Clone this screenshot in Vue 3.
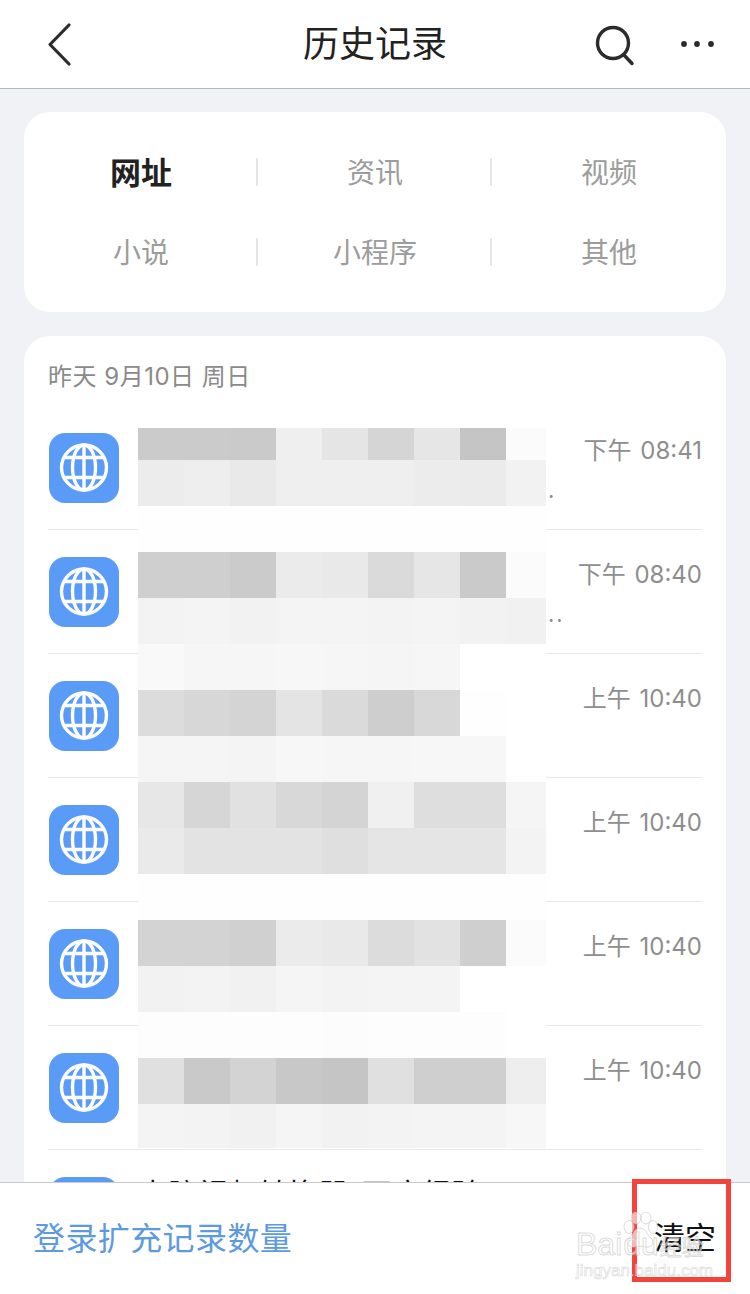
<template>
  <div class="page">
    <header class="top-bar">
      <div class="bar-left">
        <svg class="back" width="30" height="46" viewBox="0 0 30 46" fill="none">
          <path d="M24 4 L5 23.5 L24 43" stroke="#2b2b2b" stroke-width="3.2" stroke-linecap="round" stroke-linejoin="round" />
        </svg>
      </div>
      <h1 class="title">历史记录</h1>
      <div class="bar-right">
        <svg class="search" width="44" height="46" viewBox="0 0 44 46" fill="none">
          <circle cx="20" cy="20" r="15.5" stroke="#2b2b2b" stroke-width="3.4" />
          <path d="M31 32 L39 40.5" stroke="#2b2b2b" stroke-width="3.4" stroke-linecap="round" />
        </svg>
        <svg class="more" width="36" height="10" viewBox="0 0 36 10">
          <circle cx="4" cy="5" r="2.9" fill="#2b2b2b" />
          <circle cx="17" cy="5" r="2.9" fill="#2b2b2b" />
          <circle cx="31" cy="5" r="2.9" fill="#2b2b2b" />
        </svg>
      </div>
    </header>

    <main class="content">
      <section class="card tabs">
        <div v-for="tab in tabs" :key="tab" class="tab" :class="{ active: tab === '网址' }">
          {{ tab }}
        </div>
      </section>

      <section class="card history">
        <div class="date">昨天 9月10日 周日</div>
        <div v-for="(row, i) in rows" :key="i" class="row">
          <div class="site-icon">
            <svg width="52" height="52" viewBox="0 0 52 52" fill="none" stroke="#fff" stroke-width="3.4">
              <circle cx="26" cy="25.5" r="22.5" />
              <ellipse cx="26" cy="25.5" rx="11.5" ry="22.5" />
              <path d="M26 3 V48 M6.5 15.5 H45.5 M6.5 35.5 H45.5" />
            </svg>
          </div>
          <div class="row-body">
            <div class="row-title">{{ row.title }}</div>
            <div class="row-sub">{{ row.sub }}</div>
          </div>
          <div class="row-time">{{ row.time }}</div>
        </div>

        <!-- mosaic over the page titles -->
        <div class="mosaic">
          <div v-for="(line, i) in mosaic" :key="i" class="mosaic-line">
            <span v-for="(c, j) in line" :key="j" :style="{ background: '#' + c }"></span>
          </div>
        </div>
      </section>
    </main>

    <footer class="bottom-bar">
      <span class="login">登录扩充记录数量</span>
      <span class="clear">清空</span>
    </footer>

    <div class="red-box"></div>

    <div class="watermark">
      <svg class="paw" width="36" height="38" viewBox="0 0 36 38">
        <ellipse cx="7" cy="15" rx="5" ry="6.5" />
        <ellipse cx="14" cy="6" rx="5" ry="6" />
        <ellipse cx="24" cy="6" rx="5" ry="6" />
        <ellipse cx="31" cy="15" rx="4.5" ry="6.5" />
        <path d="M18 16 C12 16 11 23 7 26 C3 30 6 36 12 35 C15 34 21 34 24 35 C30 36 33 30 29 26 C25 23 24 16 18 16 Z" />
      </svg>
      <div class="wm-main">Bai<span class="wm-gap">du</span><span class="wm-cn">经验</span></div>
      <div class="wm-sub">jingyan.baidu.com</div>
    </div>
  </div>
</template>

<script setup>
const tabs = ["网址", "资讯", "视频", "小说", "小程序", "其他"];

const rows = [
  { time: "下午 08:41", title: "", sub: "." },
  { time: "下午 08:40", title: "", sub: ".." },
  { time: "上午 10:40", title: "", sub: "" },
  { time: "上午 10:40", title: "", sub: "" },
  { time: "上午 10:40", title: "", sub: "" },
  { time: "上午 10:40", title: "", sub: "" },
  { time: "", title: "电脑视频转换器_百度经验", sub: "" },
];

const w = "fff";
const mosaic = [
  ["cbcbcb", "cbcbcb", "cacaca", "efefef", "e5e5e5", "d5d5d5", "e6e6e6", "c5c5c5", "fbfbfb"],
  ["ececec", "eeeeee", "e9e9e9", "efefef", "efefef", "efefef", "ececec", "ebebeb", "f2f2f2"],
  ["fefefe", "fefefe", "fefefe", "fefefe", "fefefe", "fefefe", "fefefe", "fefefe", "fefefe"],
  ["cfcfcf", "cfcfcf", "cbcbcb", "ebebeb", "e9e9e9", "dadada", "e6e6e6", "cacaca", "fbfbfb"],
  ["f3f3f3", "f4f4f4", "f2f2f2", "f4f4f4", "f4f4f4", "f3f3f3", "f4f4f4", "f2f2f2", "f1f1f1"],
  ["f9f9f9", "f6f6f6", "f6f6f6", "f7f7f7", "f6f6f6", "f5f5f5", "f6f6f6", w, w],
  ["dcdcdc", "d7d7d7", "d4d4d4", "e4e4e4", "dadada", "cecece", "d8d8d8", "fefefe", w],
  ["f5f5f5", "f5f5f5", "f4f4f4", "f7f7f7", "f6f6f6", "f6f6f6", "f7f7f7", "f7f7f7", w],
  ["e7e7e7", "d6d6d6", "e1e1e1", "d8d8d8", "d4d4d4", "f0f0f0", "dedede", "dedede", "f5f5f5"],
  ["eaeaea", "e3e3e3", "e3e3e3", "e3e3e3", "dfdfdf", "e5e5e5", "e5e5e5", "e5e5e5", "f3f3f3"],
  ["fefefe", "fefefe", "fefefe", "fefefe", "fefefe", "fefefe", "fefefe", "fefefe", "fefefe"],
  ["d3d3d3", "d3d3d3", "d0d0d0", "ebebeb", "e9e9e9", "dcdcdc", "e2e2e2", "cfcfcf", "fbfbfb"],
  ["f2f2f2", "f3f3f3", "f1f1f1", "f5f5f5", "f3f3f3", "f4f4f4", "f4f4f4", w, w],
  ["fdfdfd", "fdfdfd", "fdfdfd", "fdfdfd", "fcfcfc", "fdfdfd", "fdfdfd", "fdfdfd", w],
  ["e0e0e0", "c9c9c9", "d3d3d3", "c8c8c8", "c5c5c5", "e0e0e0", "cfcfcf", "cfcfcf", "eeeeee"],
  ["f4f4f4", "f3f3f3", "f1f1f1", "f5f5f5", "f2f2f2", "f3f3f3", "f4f4f4", "f4f4f4", "f7f7f7"],
];
</script>

<style scoped>
.page {
  position: relative;
  width: 750px;
  height: 1294px;
  display: flex;
  flex-direction: column;
  overflow: hidden;
  background: #f1f2f6;
  font-family: "Inter", "Noto Sans CJK SC", sans-serif;
}

.top-bar {
  flex: none;
  height: 88px;
  display: grid;
  grid-template-columns: 1fr auto 1fr;
  align-items: center;
  background: #fff;
  border-bottom: 1px solid #b8b8bb;
}

.bar-left {
  display: flex;
  padding-left: 45px;
}

.bar-right {
  display: flex;
  align-items: center;
  justify-content: flex-end;
  padding-right: 34px;
}

.title {
  margin: 0;
  font-size: 36px;
  font-weight: 400;
  color: #222;
  line-height: 88px;
}

.search {
  margin: 4px 43px 0 0;
}

.tabs {
  display: grid;
  grid-template-columns: repeat(3, 234px);
  grid-auto-rows: 80px;
  padding: 20px 0;
}

.content {
  flex: 1;
  min-height: 0;
  overflow: hidden;
  padding: 23px 24px 0;
}

.card {
  background: #fff;
  border-radius: 26px;
}

.tab {
  position: relative;
  display: flex;
  align-items: center;
  justify-content: center;
  box-sizing: border-box;
  padding-bottom: 3px;
  font-size: 28px;
  color: #9c9c9c;
}

.tab:not(:nth-child(3n))::after {
  content: "";
  position: absolute;
  right: 0;
  top: 26px;
  width: 2px;
  height: 28px;
  background: #e6e6e6;
}

.tab.active {
  font-size: 31px;
  font-weight: 700;
  color: #222;
}

.history {
  position: relative;
  margin-top: 24px;
  padding: 0 24px;
}

.date {
  height: 70px;
  padding: 24px 0 0;
  box-sizing: border-box;
  font-size: 24px;
  line-height: 34px;
  letter-spacing: 0.5px;
  color: #8a8a8a;
}

.row {
  display: flex;
  align-items: flex-start;
  height: 124px;
  box-sizing: border-box;
  padding-top: 27px;
  border-bottom: 1px solid #e8e8ea;
}

.site-icon {
  flex: none;
  width: 70px;
  height: 70px;
  margin-left: 1px;
  border-radius: 16px;
  background: #5b9bf8;
  display: flex;
  align-items: center;
  justify-content: center;
}

.row-body {
  flex: 1;
  min-width: 0;
  padding-left: 19px;
}

.row-title {
  height: 34px;
  font-size: 30px;
  line-height: 34px;
  color: #111;
  white-space: nowrap;
}

.row-sub {
  height: 34px;
  margin-top: 6px;
  padding-left: 410px;
  font-size: 22px;
  line-height: 34px;
  letter-spacing: 2px;
  color: #8a8a8a;
}

.row-time {
  flex: none;
  margin-top: 1px;
  font-size: 24px;
  line-height: 34px;
  word-spacing: 2px;
  color: #8e8e8e;
}

.mosaic {
  position: absolute;
  left: 114px;
  top: 92px;
}

.mosaic-line {
  display: grid;
  grid-template-columns: repeat(8, 46px) 40px;
  height: 46px;
}

.mosaic-line:first-child {
  height: 32px;
}

.mosaic-line:last-child {
  height: 44px;
}

.bottom-bar {
  flex: none;
  height: 111px;
  display: flex;
  align-items: center;
  justify-content: space-between;
  box-sizing: content-box;
  padding: 0 34px 0 33px;
  background: #fff;
  border-top: 1px solid #c9c9cc;
}

.login {
  margin-bottom: 6px;
  font-size: 32px;
  letter-spacing: 0.4px;
  color: #5d9ae0;
}

.clear {
  margin-bottom: 6px;
  font-size: 31px;
  color: #111;
}

.red-box {
  position: absolute;
  left: 632px;
  top: 1179px;
  width: 99px;
  height: 103px;
  box-sizing: border-box;
  border: 5px solid #f4433a;
}

.watermark {
  position: absolute;
  left: 574px;
  top: 1211px;
  width: 140px;
  height: 72px;
  color: rgba(255, 255, 255, 0.55);
  font-family: "Liberation Sans", "Noto Sans CJK SC", sans-serif;
}

.paw {
  position: absolute;
  left: 48px;
  top: 1px;
  fill: rgba(255, 255, 255, 0.6);
  stroke: rgba(190, 190, 190, 0.55);
  stroke-width: 1;
}

.wm-main {
  position: absolute;
  left: 2px;
  top: 15px;
  font-size: 32px;
  line-height: 36px;
  white-space: nowrap;
  -webkit-text-stroke: 1px rgba(190, 190, 190, 0.55);
}

.wm-gap {
  margin: 0 1px;
}

.wm-cn {
  font-size: 22px;
}

.wm-sub {
  position: absolute;
  left: 2px;
  top: 50px;
  font-size: 17px;
  line-height: 20px;
  white-space: nowrap;
  -webkit-text-stroke: 0.6px rgba(190, 190, 190, 0.6);
}
</style>
